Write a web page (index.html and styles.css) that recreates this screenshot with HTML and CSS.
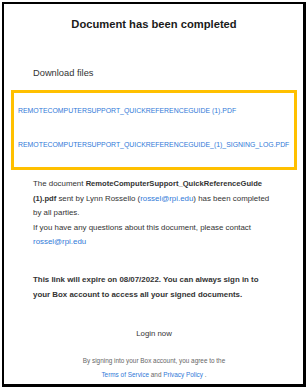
FILE: index.html
```html
<!DOCTYPE html>
<html>
<head>
<meta charset="utf-8">
<link rel="stylesheet" href="styles.css">
</head>
<body>
<div class="frame">
  <h1 class="title">Document has been completed</h1>
  <p class="download">Download files</p>
  <div class="files">
    <a class="file" href="#">REMOTECOMPUTERSUPPORT_QUICKREFERENCEGUIDE (1).PDF</a>
    <a class="file" href="#">REMOTECOMPUTERSUPPORT_QUICKREFERENCEGUIDE_(1)_SIGNING_LOG.PDF</a>
  </div>
  <p class="message">The document <b>RemoteComputerSupport_QuickReferenceGuide</b><br><b>(1).pdf</b> sent by Lynn Rossello (<a href="#">rossel@rpi.edu</a>) has been completed<br>by all parties.<br>If you have any questions about this document, please contact<br><a href="#">rossel@rpi.edu</a></p>
  <p class="expire">This link will expire on 08/07/2022. You can always sign in to<br>your Box account to access all your signed documents.</p>
  <p class="login">Login now</p>
  <p class="legal">By signing into your Box account, you agree to the<br><a href="#">Terms of Service</a> and <a href="#">Privacy Policy</a> .</p>
</div>
</body>
</html>
```
FILE: styles.css
```css
html, body {
  margin: 0;
  padding: 0;
  background: #fff;
}
body {
  font-family: "Liberation Sans", Arial, sans-serif;
  color: #333;
}
.frame {
  box-sizing: border-box;
  margin: 2px 0 0 2px;
  width: 304px;
  height: 385px;
  border-style: solid;
  border-color: #000;
  border-width: 2px 3px 3px 2px;
  padding: 12px 6px 0 7px;
  display: flex;
  flex-direction: column;
}
.title {
  margin: 0;
  font-size: 11.2px;
  line-height: 16px;
  font-weight: bold;
  color: #1a1a1a;
  text-align: center;
}
.download {
  margin: 34px 0 0 22px;
  font-size: 9.3px;
  line-height: 14px;
}
.files {
  margin-top: 10px;
  border: 3px solid #ffc000;
  padding: 12px 4px 16px 4px;
  display: flex;
  flex-direction: column;
  gap: 22px;
}
.file {
  font-size: 6.9px;
  line-height: 12px;
  white-space: nowrap;
}
a {
  color: #3079d8;
  text-decoration: none;
}
.message {
  margin: 7px 10px 0 22px;
  font-size: 7.9px;
  line-height: 14.5px;
}
.message b {
  font-size: 7.6px;
}
.expire {
  margin: 22px 10px 0 22px;
  font-size: 7.9px;
  line-height: 15px;
  font-weight: bold;
}
.login {
  margin: 25px 0 0 0;
  text-align: center;
  font-size: 7.8px;
  line-height: 14px;
}
.legal {
  margin: 13px 0 0 0;
  text-align: center;
  font-size: 6.4px;
  line-height: 14px;
  color: #666;
}
```
